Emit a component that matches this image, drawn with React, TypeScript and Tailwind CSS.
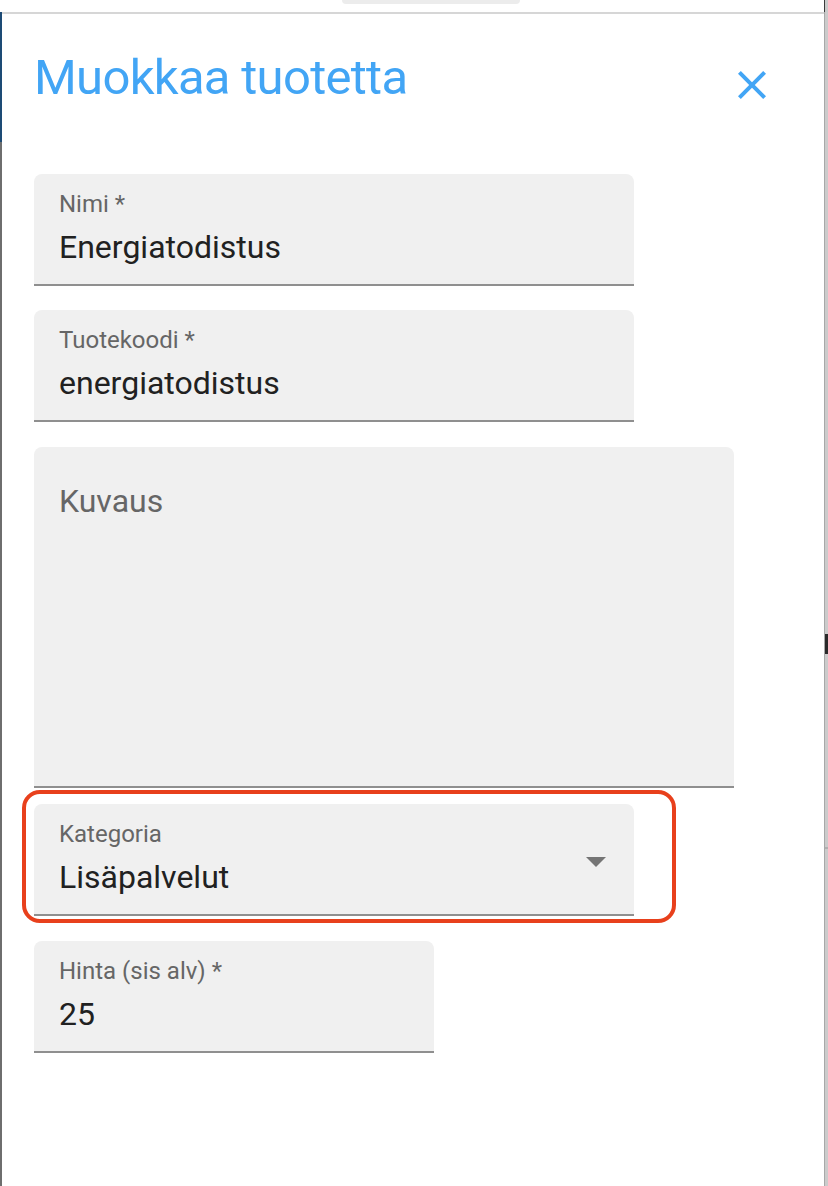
import React from 'react'

function FilledField({
  label,
  value,
  className,
}: {
  label: string
  value: string
  className: string
}) {
  return (
    <div className={`bg-[#f0f0f0] rounded-t-[8px] border-b-2 border-[#8f8f8f] h-[112px] pl-[25px] ${className}`}>
      <div className="pt-[18px] text-[24px] leading-[24px] text-[#666666]">{label}</div>
      <div className="mt-[15px] text-[32px] leading-[32px] text-[#212121]">{value}</div>
    </div>
  )
}

function CloseIcon() {
  return (
    <svg width="48" height="48" viewBox="0 0 24 24" fill="#42a5f5">
      <path d="M19 6.41 17.59 5 12 10.59 6.41 5 5 6.41 10.59 12 5 17.59 6.41 19 12 13.41 17.59 19 19 17.59 13.41 12z" />
    </svg>
  )
}

function ArrowDropDown() {
  return (
    <svg width="48" height="48" viewBox="0 0 24 24" fill="#757575">
      <path d="M7 10l5 5 5-5z" />
    </svg>
  )
}

export default function App() {
  return (
    <div className="w-[828px] h-[1186px] bg-white flex flex-col overflow-hidden" style={{ fontFamily: 'Roboto, "Liberation Sans", sans-serif' }}>
      {/* strip of the page behind the dialog */}
      <div className="h-[12px] flex shrink-0">
        <div className="flex-1 flex justify-center">
          <div className="w-[178px] h-[4px] ml-[38px] bg-[#ececec] rounded-b-[6px]"></div>
        </div>
        <div className="w-[1px] bg-[#3a3a3a]"></div>
        <div className="w-[3px] bg-[#c9c9c9]"></div>
      </div>
      <div className="flex flex-1">
        <div className="w-[2px] flex flex-col">
          <div className="h-[130px] bg-[#1d4b75]"></div>
          <div className="flex-1 bg-[#6e6e6e]"></div>
        </div>
        <div className="flex-1 flex flex-col">
          <div className="h-[2px] bg-[#d6d6d6]"></div>
          <div className="h-[160px] flex items-start justify-between pl-[32px] pr-[48px]">
            <h1 className="mt-[39px] text-[49px] leading-[49px] tracking-[-0.7px] text-[#42a5f5] font-normal">Muokkaa tuotetta</h1>
            <div className="mt-[47px]">
              <CloseIcon />
            </div>
          </div>
          <div className="pl-[32px] flex flex-col">
            <FilledField label="Nimi *" value="Energiatodistus" className="w-[600px]" />
            <FilledField label="Tuotekoodi *" value="energiatodistus" className="w-[600px] mt-[24px]" />
            <div className="mt-[25px] w-[700px] h-[341px] bg-[#f0f0f0] rounded-t-[8px] border-b-2 border-[#8f8f8f] pl-[25px]">
              <div className="pt-[38px] text-[32px] leading-[32px] text-[#666666]">Kuvaus</div>
            </div>
            <div className="relative mt-[16px] w-[600px]">
              <div className="bg-[#f0f0f0] rounded-t-[8px] border-b-2 border-[#8f8f8f] h-[112px] pl-[25px] flex justify-between">
                <div>
                  <div className="pt-[18px] text-[24px] leading-[24px] text-[#666666]">Kategoria</div>
                  <div className="mt-[15px] text-[32px] leading-[32px] text-[#212121]">Lisäpalvelut</div>
                </div>
                <div className="mt-[33px] mr-[14px]">
                  <ArrowDropDown />
                </div>
              </div>
              <span className="absolute left-[-12px] right-[-42px] top-[-14px] bottom-[-7px] border-[4px] border-[#e8401c] rounded-[18px]"></span>
            </div>
            <FilledField label="Hinta (sis alv) *" value="25" className="w-[400px] mt-[25px]" />
          </div>
        </div>
        <div className="w-[4px] flex flex-col border-l border-[#a8a8a8] bg-[#cbcbcb] relative">
          <div className="h-[622px]"></div>
          <div className="h-[20px] w-[3px] bg-[#2a2a2a]"></div>
          <div className="h-[193px]"></div>
          <div className="h-[2px] bg-[#b0b0b0]"></div>
        </div>
      </div>
    </div>
  )
}
